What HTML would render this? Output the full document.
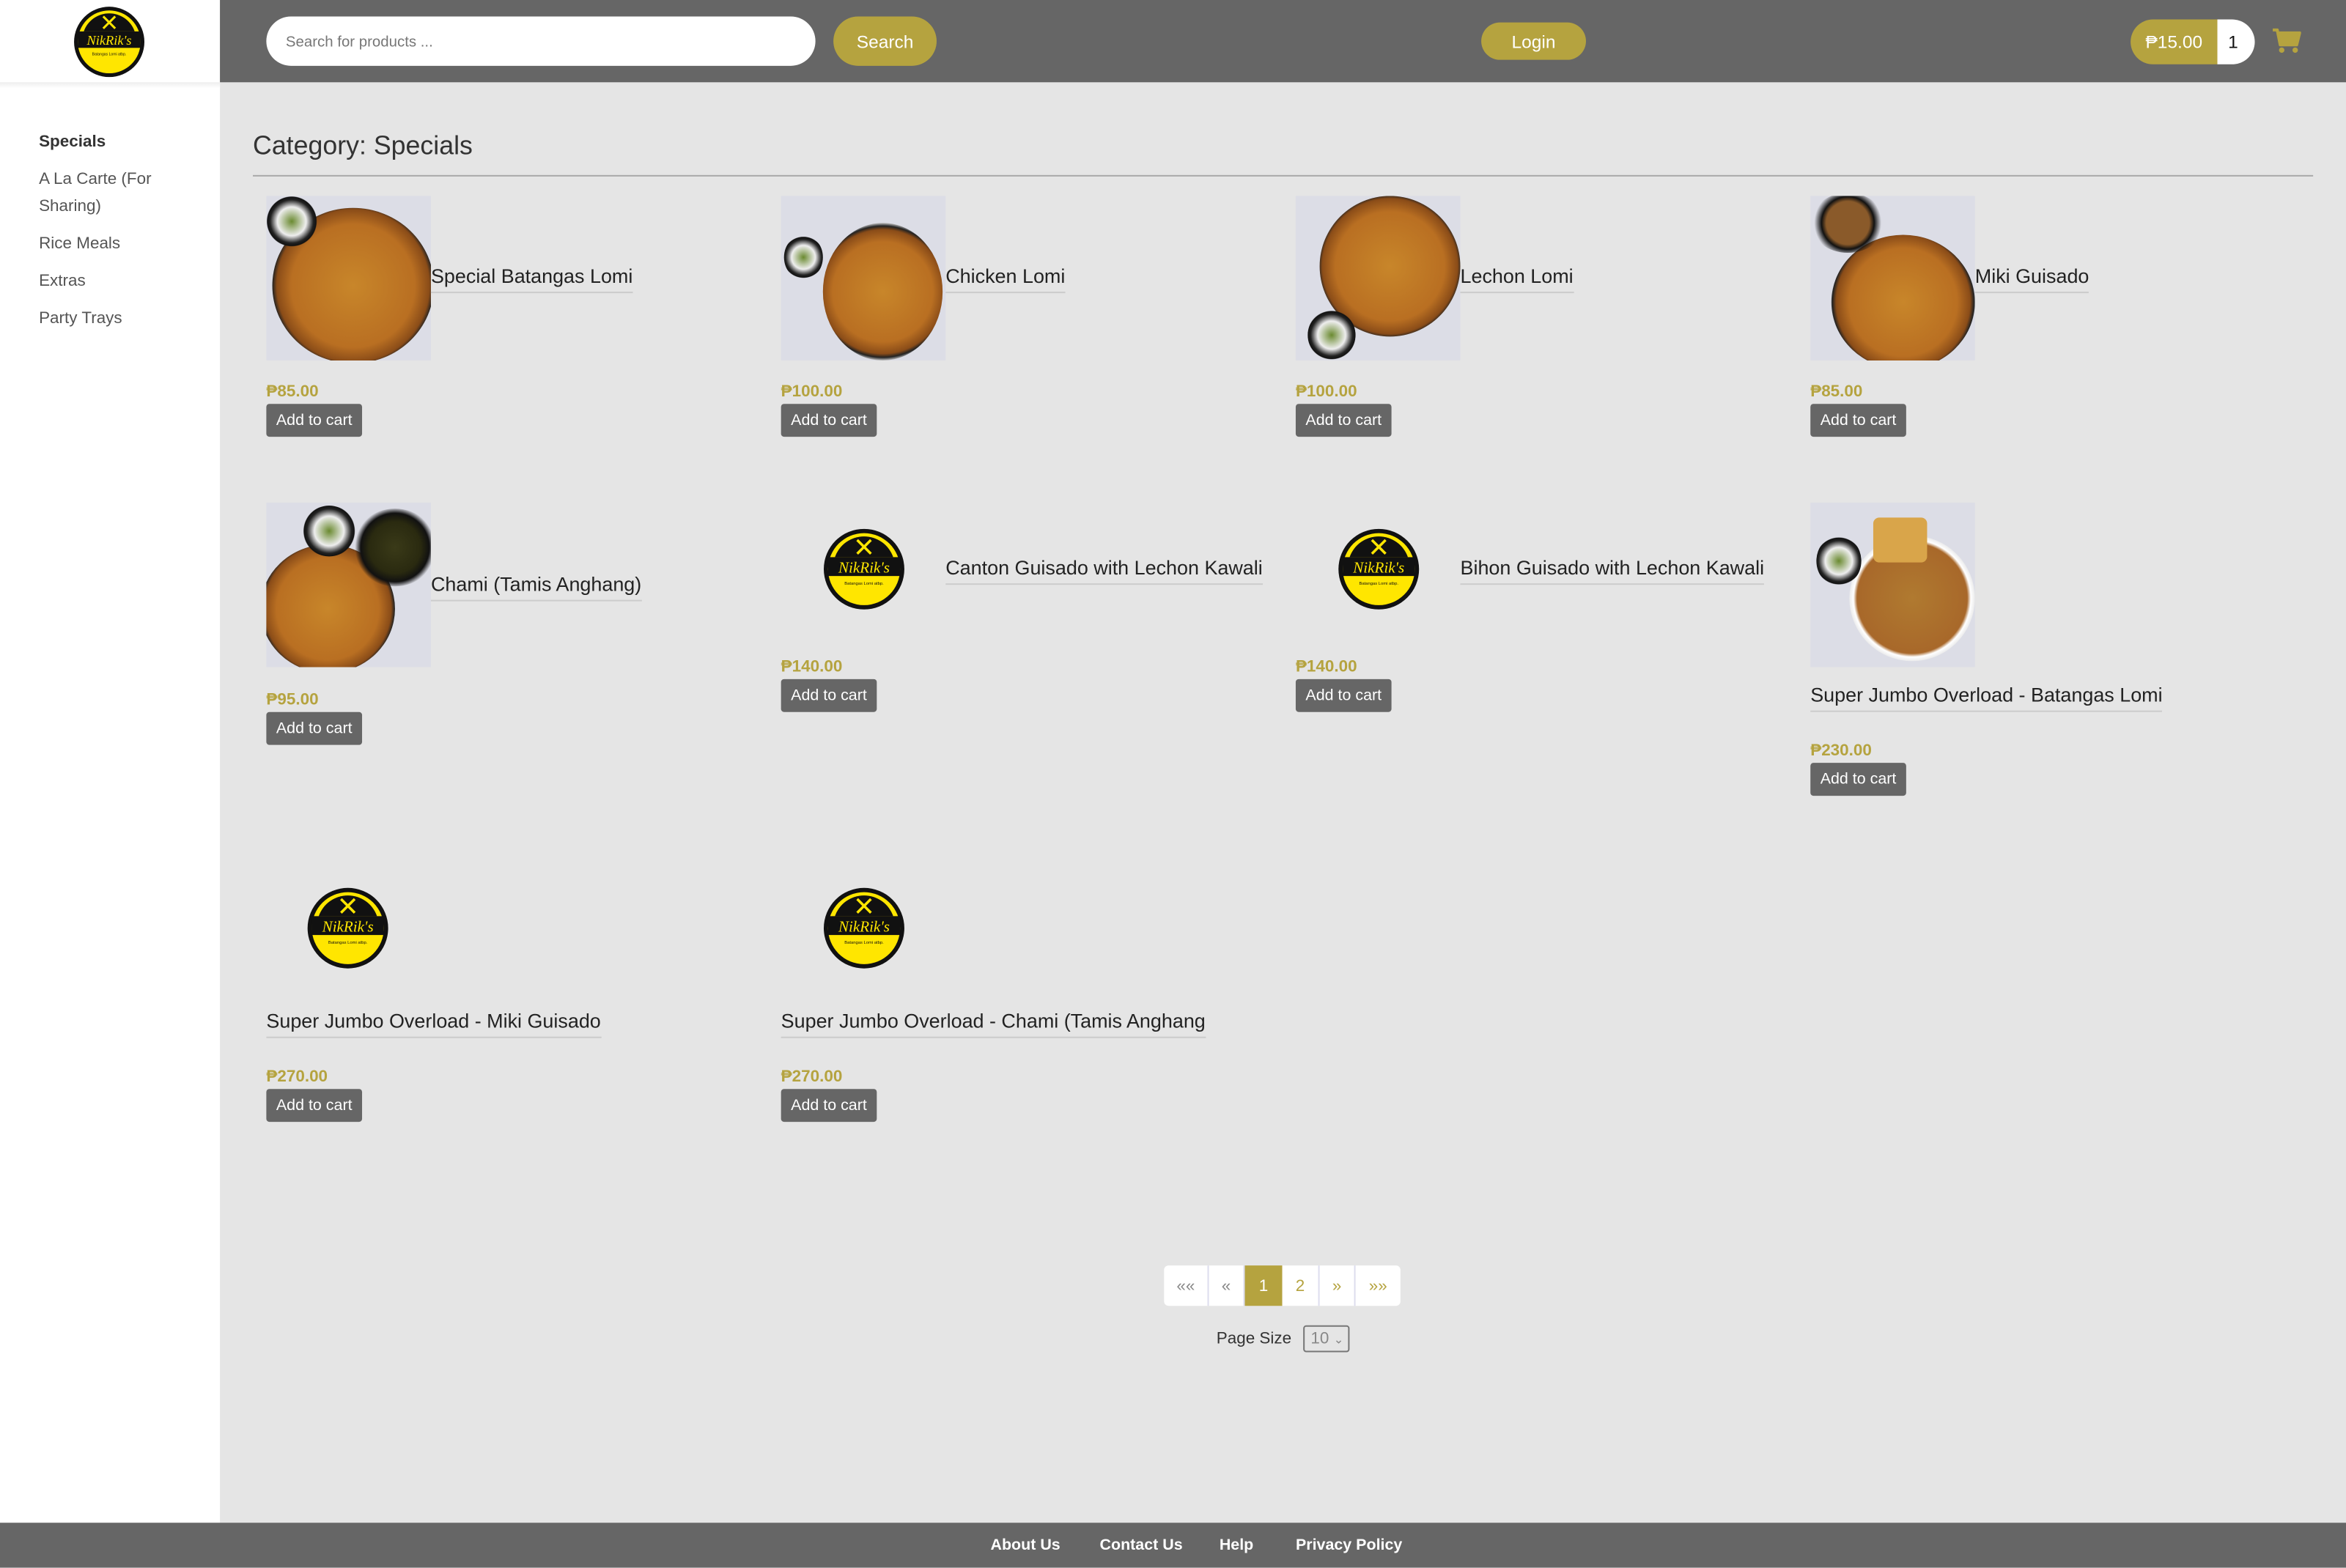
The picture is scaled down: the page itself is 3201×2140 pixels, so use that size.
<!DOCTYPE html>
<html><head><meta charset="utf-8">
<style>
*{box-sizing:border-box;margin:0;padding:0}
html,body{width:3201px;height:2139px;overflow:hidden;background:#e5e5e5}
#w{position:absolute;left:0;top:0;width:1568px;height:1048px;transform:scale(2.0415);transform-origin:0 0;font-family:"Liberation Sans",sans-serif;color:#222}
.a{position:absolute}
.side{left:0;top:0;width:147px;height:1018px;background:#fff}
.hdr{left:147px;top:0;width:1421px;height:55px;background:#666}
.sl{left:26px;font-size:11px;color:#555;line-height:18px}
.img{position:absolute;width:110px;height:110px;background:#dcdde6;overflow:hidden}
.bowl{position:absolute;border-radius:50%;background:radial-gradient(circle,#c8862a 0,#b96f22 55%,#8a4c18 68%,#222 72%,#ddd 76%,#222 80%,transparent 82%)}
.side-b{position:absolute;border-radius:50%;background:radial-gradient(circle,#6a8a30 0,#eee 40%,#222 60%,#111 68%,transparent 70%)}
.nm{position:absolute;font-size:13.2px;color:#222;border-bottom:1px solid #ccc;padding-bottom:3px;white-space:nowrap;margin-top:1px}
.pr{position:absolute;font-size:11px;font-weight:bold;color:#b5a33f;margin-top:1.5px}
.btn{position:absolute;width:64px;height:22px;background:#666;color:#fff;font-size:10.5px;border-radius:2px;text-align:center;line-height:23px}
.pg{position:absolute;top:846px;height:27px;background:#fff;border-right:1px solid #dde;font-size:11px;text-align:center;line-height:29px;color:#b5a33f}
.ft{position:absolute;top:1027px;font-size:10.5px;font-weight:bold;color:#fff}
</style></head><body><div id="w">
<div class="a side"></div>
<div class="a" style="left:0;top:55px;width:147px;height:4px;background:linear-gradient(#eee,#fff)"></div>
<svg class="a" style="left:49px;top:4px" width="48" height="48" viewBox="0 0 48 48"><circle cx="24" cy="24" r="23.5" fill="#111"/><circle cx="24" cy="24" r="21" fill="#ffe600"/><path d="M7 17 A18 18 0 0 1 41 17 Z" fill="#111"/><rect x="3" y="17" width="42" height="11" fill="#111"/><path d="M20 7 L28 15 M28 7 L20 15" stroke="#ffe600" stroke-width="1.5"/><text x="24" y="26" font-size="9" font-style="italic" fill="#ffe600" text-anchor="middle" font-family="Liberation Serif">NikRik's</text><text x="24" y="33" font-size="2.5" fill="#111" text-anchor="middle">Batangas Lomi atbp.</text></svg>
<div class="a sl" style="top:86px;font-weight:bold;color:#333">Specials</div>
<div class="a sl" style="top:111px">A La Carte (For<br>Sharing)</div>
<div class="a sl" style="top:154px">Rice Meals</div>
<div class="a sl" style="top:179px">Extras</div>
<div class="a sl" style="top:204px">Party Trays</div>
<div class="a hdr"></div>
<div class="a" style="left:178px;top:11px;width:367px;height:33px;background:#fff;border-radius:17px;font-size:10px;color:#777;line-height:36px;padding-left:13px">Search for products ...</div>
<div class="a" style="left:557px;top:11px;width:69px;height:33px;background:#b5a33f;border-radius:17px;font-size:12px;color:#fff;line-height:35px;text-align:center">Search</div>
<div class="a" style="left:990px;top:15px;width:70px;height:25px;background:#b5a33f;border-radius:13px;font-size:12px;color:#fff;line-height:27px;text-align:center">Login</div>
<div class="a" style="left:1424px;top:13px;width:58px;height:30px;background:#b5a33f;border-radius:15px 0 0 15px;font-size:12px;color:#fff;line-height:31px;text-align:center">₱15.00</div>
<div class="a" style="left:1482px;top:13px;width:25px;height:30px;background:#fff;border-radius:0 15px 15px 0;font-size:12px;color:#111;line-height:31px;text-align:center;padding-right:4px">1</div>
<svg class="a" style="left:1519px;top:19px" width="19" height="17" viewBox="0 0 19 17"><path d="M0 1 H3 L5 11 H16 L18 3 H4" fill="#b5a33f" stroke="#b5a33f" stroke-width="2" stroke-linejoin="round"/><circle cx="6" cy="14.5" r="1.8" fill="#b5a33f"/><circle cx="15" cy="14.5" r="1.8" fill="#b5a33f"/></svg>
<div class="a" style="left:169px;top:87px;font-size:17.5px;color:#333">Category: Specials</div>
<div class="a" style="left:169px;top:117px;width:1377px;height:1px;background:#aaa"></div>

<div class="img" style="left:178px;top:131px"><div class="bowl" style="left:4px;top:8px;width:108px;height:104px"></div><div class="side-b" style="left:0;top:0;width:34px;height:34px"></div></div>
<div class="nm" style="left:288px;top:176px">Special Batangas Lomi</div>
<div class="pr" style="left:178px;top:254px">₱85.00</div><div class="btn" style="left:178px;top:270px">Add to cart</div>

<div class="img" style="left:522px;top:131px"><div class="bowl" style="left:28px;top:18px;width:80px;height:92px"></div><div class="side-b" style="left:2px;top:26px;width:26px;height:30px"></div></div>
<div class="nm" style="left:632px;top:176px">Chicken Lomi</div>
<div class="pr" style="left:522px;top:254px">₱100.00</div><div class="btn" style="left:522px;top:270px">Add to cart</div>

<div class="img" style="left:866px;top:131px"><div class="bowl" style="left:16px;top:0;width:94px;height:94px"></div><div class="side-b" style="left:8px;top:76px;width:32px;height:34px"></div></div>
<div class="nm" style="left:976px;top:176px">Lechon Lomi</div>
<div class="pr" style="left:866px;top:254px">₱100.00</div><div class="btn" style="left:866px;top:270px">Add to cart</div>

<div class="img" style="left:1210px;top:131px"><div class="bowl" style="left:14px;top:26px;width:96px;height:90px"></div><div class="side-b" style="left:0;top:-2px;width:50px;height:40px;background:radial-gradient(circle,#8a5a2a 0,#8a5a2a 45%,#111 55%,transparent 70%)"></div></div>
<div class="nm" style="left:1320px;top:176px">Miki Guisado</div>
<div class="pr" style="left:1210px;top:254px">₱85.00</div><div class="btn" style="left:1210px;top:270px">Add to cart</div>

<div class="img" style="left:178px;top:336px"><div class="bowl" style="left:-4px;top:28px;width:90px;height:86px"></div><div class="side-b" style="left:58px;top:4px;width:56px;height:52px;background:radial-gradient(circle,#3a3a18 0,#2a2a10 45%,#111 60%,transparent 70%)"></div><div class="side-b" style="left:24px;top:2px;width:36px;height:34px"></div></div>
<div class="nm" style="left:288px;top:382px">Chami (Tamis Anghang)</div>
<div class="pr" style="left:178px;top:460px">₱95.00</div><div class="btn" style="left:178px;top:476px">Add to cart</div>

<svg class="a" style="left:550px;top:353px" width="55" height="55" viewBox="0 0 48 48"><circle cx="24" cy="24" r="23.5" fill="#111"/><circle cx="24" cy="24" r="21" fill="#ffe600"/><path d="M7 17 A18 18 0 0 1 41 17 Z" fill="#111"/><rect x="3" y="17" width="42" height="11" fill="#111"/><path d="M20 7 L28 15 M28 7 L20 15" stroke="#ffe600" stroke-width="1.5"/><text x="24" y="26" font-size="9" font-style="italic" fill="#ffe600" text-anchor="middle" font-family="Liberation Serif">NikRik's</text><text x="24" y="33" font-size="2.5" fill="#111" text-anchor="middle">Batangas Lomi atbp.</text></svg>
<div class="nm" style="left:632px;top:371px">Canton Guisado with Lechon Kawali</div>
<div class="pr" style="left:522px;top:438px">₱140.00</div><div class="btn" style="left:522px;top:454px">Add to cart</div>

<svg class="a" style="left:894px;top:353px" width="55" height="55" viewBox="0 0 48 48"><circle cx="24" cy="24" r="23.5" fill="#111"/><circle cx="24" cy="24" r="21" fill="#ffe600"/><path d="M7 17 A18 18 0 0 1 41 17 Z" fill="#111"/><rect x="3" y="17" width="42" height="11" fill="#111"/><path d="M20 7 L28 15 M28 7 L20 15" stroke="#ffe600" stroke-width="1.5"/><text x="24" y="26" font-size="9" font-style="italic" fill="#ffe600" text-anchor="middle" font-family="Liberation Serif">NikRik's</text><text x="24" y="33" font-size="2.5" fill="#111" text-anchor="middle">Batangas Lomi atbp.</text></svg>
<div class="nm" style="left:976px;top:371px">Bihon Guisado with Lechon Kawali</div>
<div class="pr" style="left:866px;top:438px">₱140.00</div><div class="btn" style="left:866px;top:454px">Add to cart</div>

<div class="img" style="left:1210px;top:336px"><div class="bowl" style="left:26px;top:22px;width:84px;height:84px;background:radial-gradient(circle,#b07a30 0,#a8682a 62%,#fff 66%,#eee 70%,transparent 72%)"></div><div class="a" style="left:42px;top:10px;width:36px;height:30px;background:#d9a54a;border-radius:4px"></div><div class="side-b" style="left:4px;top:22px;width:30px;height:34px"></div></div>
<div class="nm" style="left:1210px;top:456px">Super Jumbo Overload - Batangas Lomi</div>
<div class="pr" style="left:1210px;top:494px">₱230.00</div><div class="btn" style="left:1210px;top:510px">Add to cart</div>

<svg class="a" style="left:205px;top:593px" width="55" height="55" viewBox="0 0 48 48"><circle cx="24" cy="24" r="23.5" fill="#111"/><circle cx="24" cy="24" r="21" fill="#ffe600"/><path d="M7 17 A18 18 0 0 1 41 17 Z" fill="#111"/><rect x="3" y="17" width="42" height="11" fill="#111"/><path d="M20 7 L28 15 M28 7 L20 15" stroke="#ffe600" stroke-width="1.5"/><text x="24" y="26" font-size="9" font-style="italic" fill="#ffe600" text-anchor="middle" font-family="Liberation Serif">NikRik's</text><text x="24" y="33" font-size="2.5" fill="#111" text-anchor="middle">Batangas Lomi atbp.</text></svg>
<div class="nm" style="left:178px;top:674px">Super Jumbo Overload - Miki Guisado</div>
<div class="pr" style="left:178px;top:712px">₱270.00</div><div class="btn" style="left:178px;top:728px">Add to cart</div>

<svg class="a" style="left:550px;top:593px" width="55" height="55" viewBox="0 0 48 48"><circle cx="24" cy="24" r="23.5" fill="#111"/><circle cx="24" cy="24" r="21" fill="#ffe600"/><path d="M7 17 A18 18 0 0 1 41 17 Z" fill="#111"/><rect x="3" y="17" width="42" height="11" fill="#111"/><path d="M20 7 L28 15 M28 7 L20 15" stroke="#ffe600" stroke-width="1.5"/><text x="24" y="26" font-size="9" font-style="italic" fill="#ffe600" text-anchor="middle" font-family="Liberation Serif">NikRik's</text><text x="24" y="33" font-size="2.5" fill="#111" text-anchor="middle">Batangas Lomi atbp.</text></svg>
<div class="nm" style="left:522px;top:674px">Super Jumbo Overload - Chami (Tamis Anghang</div>
<div class="pr" style="left:522px;top:712px">₱270.00</div><div class="btn" style="left:522px;top:728px">Add to cart</div>

<div class="pg" style="left:778px;width:30px;color:#888;border-radius:3px 0 0 3px">««</div>
<div class="pg" style="left:808px;width:24px;color:#888">«</div>
<div class="pg" style="left:832px;width:25px;background:#b5a33f;color:#fff;border:none">1</div>
<div class="pg" style="left:857px;width:25px">2</div>
<div class="pg" style="left:882px;width:24px">»</div>
<div class="pg" style="left:906px;width:30px;border:none;border-radius:0 3px 3px 0">»»</div>
<div class="a" style="left:813px;top:889px;font-size:11px;color:#333">Page Size</div>
<div class="a" style="left:871px;top:886px;width:31px;height:18px;border:1px solid #777;border-radius:2px;font-size:11px;color:#888;line-height:17px;padding-left:4px">10 <span style="font-size:8px">⌄</span></div>

<div class="a" style="left:0;top:1018px;width:1568px;height:30px;background:#666"></div>
<div class="ft" style="left:662px">About Us</div>
<div class="ft" style="left:735px">Contact Us</div>
<div class="ft" style="left:815px">Help</div>
<div class="ft" style="left:866px">Privacy Policy</div>
</div></body></html>
